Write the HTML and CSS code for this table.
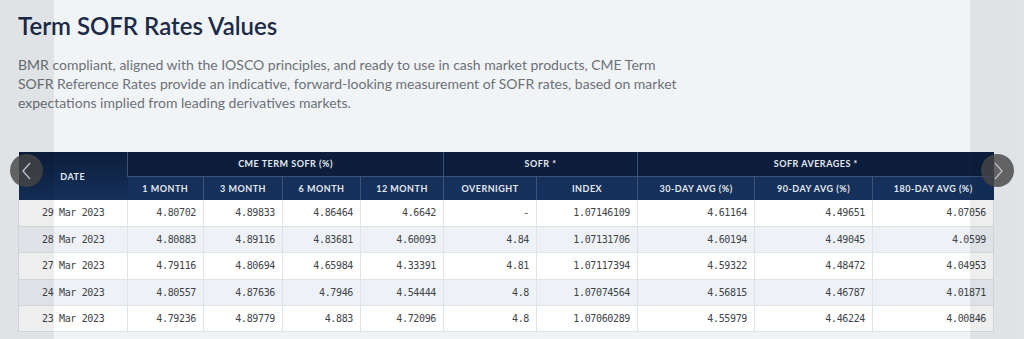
FILE: index.html
```html
<!DOCTYPE html>
<html>

<head>
  <meta charset="utf-8">
  <link rel="stylesheet" href="styles.css">
</head>

<body>
  <div class="page">
    <h1 class="title">Term SOFR Rates Values</h1>
    <p class="intro">BMR compliant, aligned with the IOSCO principles, and ready to use in cash market products, CME Term
      SOFR Reference Rates provide an indicative, forward-looking measurement of SOFR rates, based on market
      expectations implied from leading derivatives markets.</p>

    <div class="table-wrap">
      <table class="rates">
        <colgroup>
          <col style="width:109px">
          <col style="width:76px">
          <col style="width:79px">
          <col style="width:78px">
          <col style="width:83px">
          <col style="width:93px">
          <col style="width:101px">
          <col style="width:117px">
          <col style="width:118px">
          <col style="width:121px">
        </colgroup>
        <thead>
          <tr class="group-row">
            <th rowspan="2" class="date-head">Date</th>
            <th colspan="4">CME Term SOFR (%)</th>
            <th colspan="2">SOFR *</th>
            <th colspan="3">SOFR Averages *</th>
          </tr>
          <tr class="sub-row">
            <th>1 Month</th>
            <th>3 Month</th>
            <th>6 Month</th>
            <th>12 Month</th>
            <th>Overnight</th>
            <th>Index</th>
            <th>30-Day Avg (%)</th>
            <th>90-Day Avg (%)</th>
            <th>180-Day Avg (%)</th>
          </tr>
        </thead>
        <tbody>
          <tr>
            <td class="date">29 Mar 2023</td>
            <td>4.80702</td><td>4.89833</td><td>4.86464</td><td>4.6642</td>
            <td>-</td><td>1.07146109</td>
            <td>4.61164</td><td>4.49651</td><td>4.07056</td>
          </tr>
          <tr>
            <td class="date">28 Mar 2023</td>
            <td>4.80883</td><td>4.89116</td><td>4.83681</td><td>4.60093</td>
            <td>4.84</td><td>1.07131706</td>
            <td>4.60194</td><td>4.49045</td><td>4.0599</td>
          </tr>
          <tr>
            <td class="date">27 Mar 2023</td>
            <td>4.79116</td><td>4.80694</td><td>4.65984</td><td>4.33391</td>
            <td>4.81</td><td>1.07117394</td>
            <td>4.59322</td><td>4.48472</td><td>4.04953</td>
          </tr>
          <tr>
            <td class="date">24 Mar 2023</td>
            <td>4.80557</td><td>4.87636</td><td>4.7946</td><td>4.54444</td>
            <td>4.8</td><td>1.07074564</td>
            <td>4.56815</td><td>4.46787</td><td>4.01871</td>
          </tr>
          <tr>
            <td class="date">23 Mar 2023</td>
            <td>4.79236</td><td>4.89779</td><td>4.883</td><td>4.72096</td>
            <td>4.8</td><td>1.07060289</td>
            <td>4.55979</td><td>4.46224</td><td>4.00846</td>
          </tr>
        </tbody>
      </table>
    </div>

    <div class="shade shade-left"></div>
    <div class="shade shade-right"></div>

    <button class="nav nav-prev" aria-label="Previous">
      <svg width="12" height="18" viewBox="0 0 12 18"><path d="M9 1 L2 9 L9 17" /></svg>
    </button>
    <button class="nav nav-next" aria-label="Next">
      <svg width="12" height="18" viewBox="0 0 12 18"><path d="M3 1 L10 9 L3 17" /></svg>
    </button>
  </div>
</body>

</html>
```

FILE: styles.css
```css
* {
  box-sizing: border-box;
}

body {
  margin: 0;
  padding: 0;
  background-color: #f1f4f7;
  font-family: Lato, "Noto Sans", sans-serif;
}

.page {
  position: relative;
  height: 339px;
  overflow: hidden;
  padding: 10px 0 0 18px;
}

.title {
  margin: 0;
  font-size: 24px;
  font-weight: 600;
  line-height: 32px;
  color: #1b2a47;
}

.intro {
  margin: 13px 0 0;
  width: 668px;
  font-size: 14px;
  line-height: 19px;
  color: #6c7178;
}

.table-wrap {
  margin-top: 40px;
}

.rates {
  width: 975px;
  table-layout: fixed;
  border-collapse: collapse;
  font-family: "DejaVu Sans Mono", monospace;
  font-size: 10px;
  letter-spacing: -0.35px;
  color: #404348;
}

.rates th {
  font-family: Lato, "Noto Sans", sans-serif;
  font-weight: 700;
  font-size: 9px;
  letter-spacing: 0.5px;
  text-transform: uppercase;
  color: #e3e9f0;
  height: 24px;
  padding: 0 4px;
  text-align: center;
  border-left: 1px solid #3c5274;
}

.rates th:first-child {
  border-left: none;
}

.group-row th {
  background: #0c1e3c;
}

.sub-row th {
  background: #15305a;
  border-top: 1px solid #3c5274;
}

.rates .date-head {
  background: linear-gradient(#0c1e3c, #15305a);
}

.rates td {
  height: 26.4px;
  padding: 0 7px 0 0;
  text-align: right;
  border-left: 1px solid #dfe4e9;
  border-bottom: 1px solid #dfe4e9;
  background: #fff;
}

.rates td:last-child {
  border-right: 1px solid #dfe4e9;
}

.rates td.date {
  text-align: left;
  padding-left: 23px;
}

.rates tbody tr:nth-child(even) td {
  background: #eef2f6;
}

.shade {
  position: absolute;
  top: 0;
  bottom: 0;
  background: rgba(0, 0, 0, 0.065);
  pointer-events: none;
}

.shade-left {
  left: 0;
  width: 54px;
}

.shade-right {
  right: 0;
  width: 54px;
}

.nav {
  position: absolute;
  top: 154px;
  width: 33px;
  height: 33px;
  border: none;
  border-radius: 50%;
  background: rgba(70, 70, 70, 0.82);
  padding: 0;
  display: flex;
  align-items: center;
  justify-content: center;
  cursor: pointer;
}

.nav svg path {
  fill: none;
  stroke: #b9bcc0;
  stroke-width: 1.4;
}

.nav-prev {
  left: 10px;
}

.nav-next {
  left: 981px;
}
```
